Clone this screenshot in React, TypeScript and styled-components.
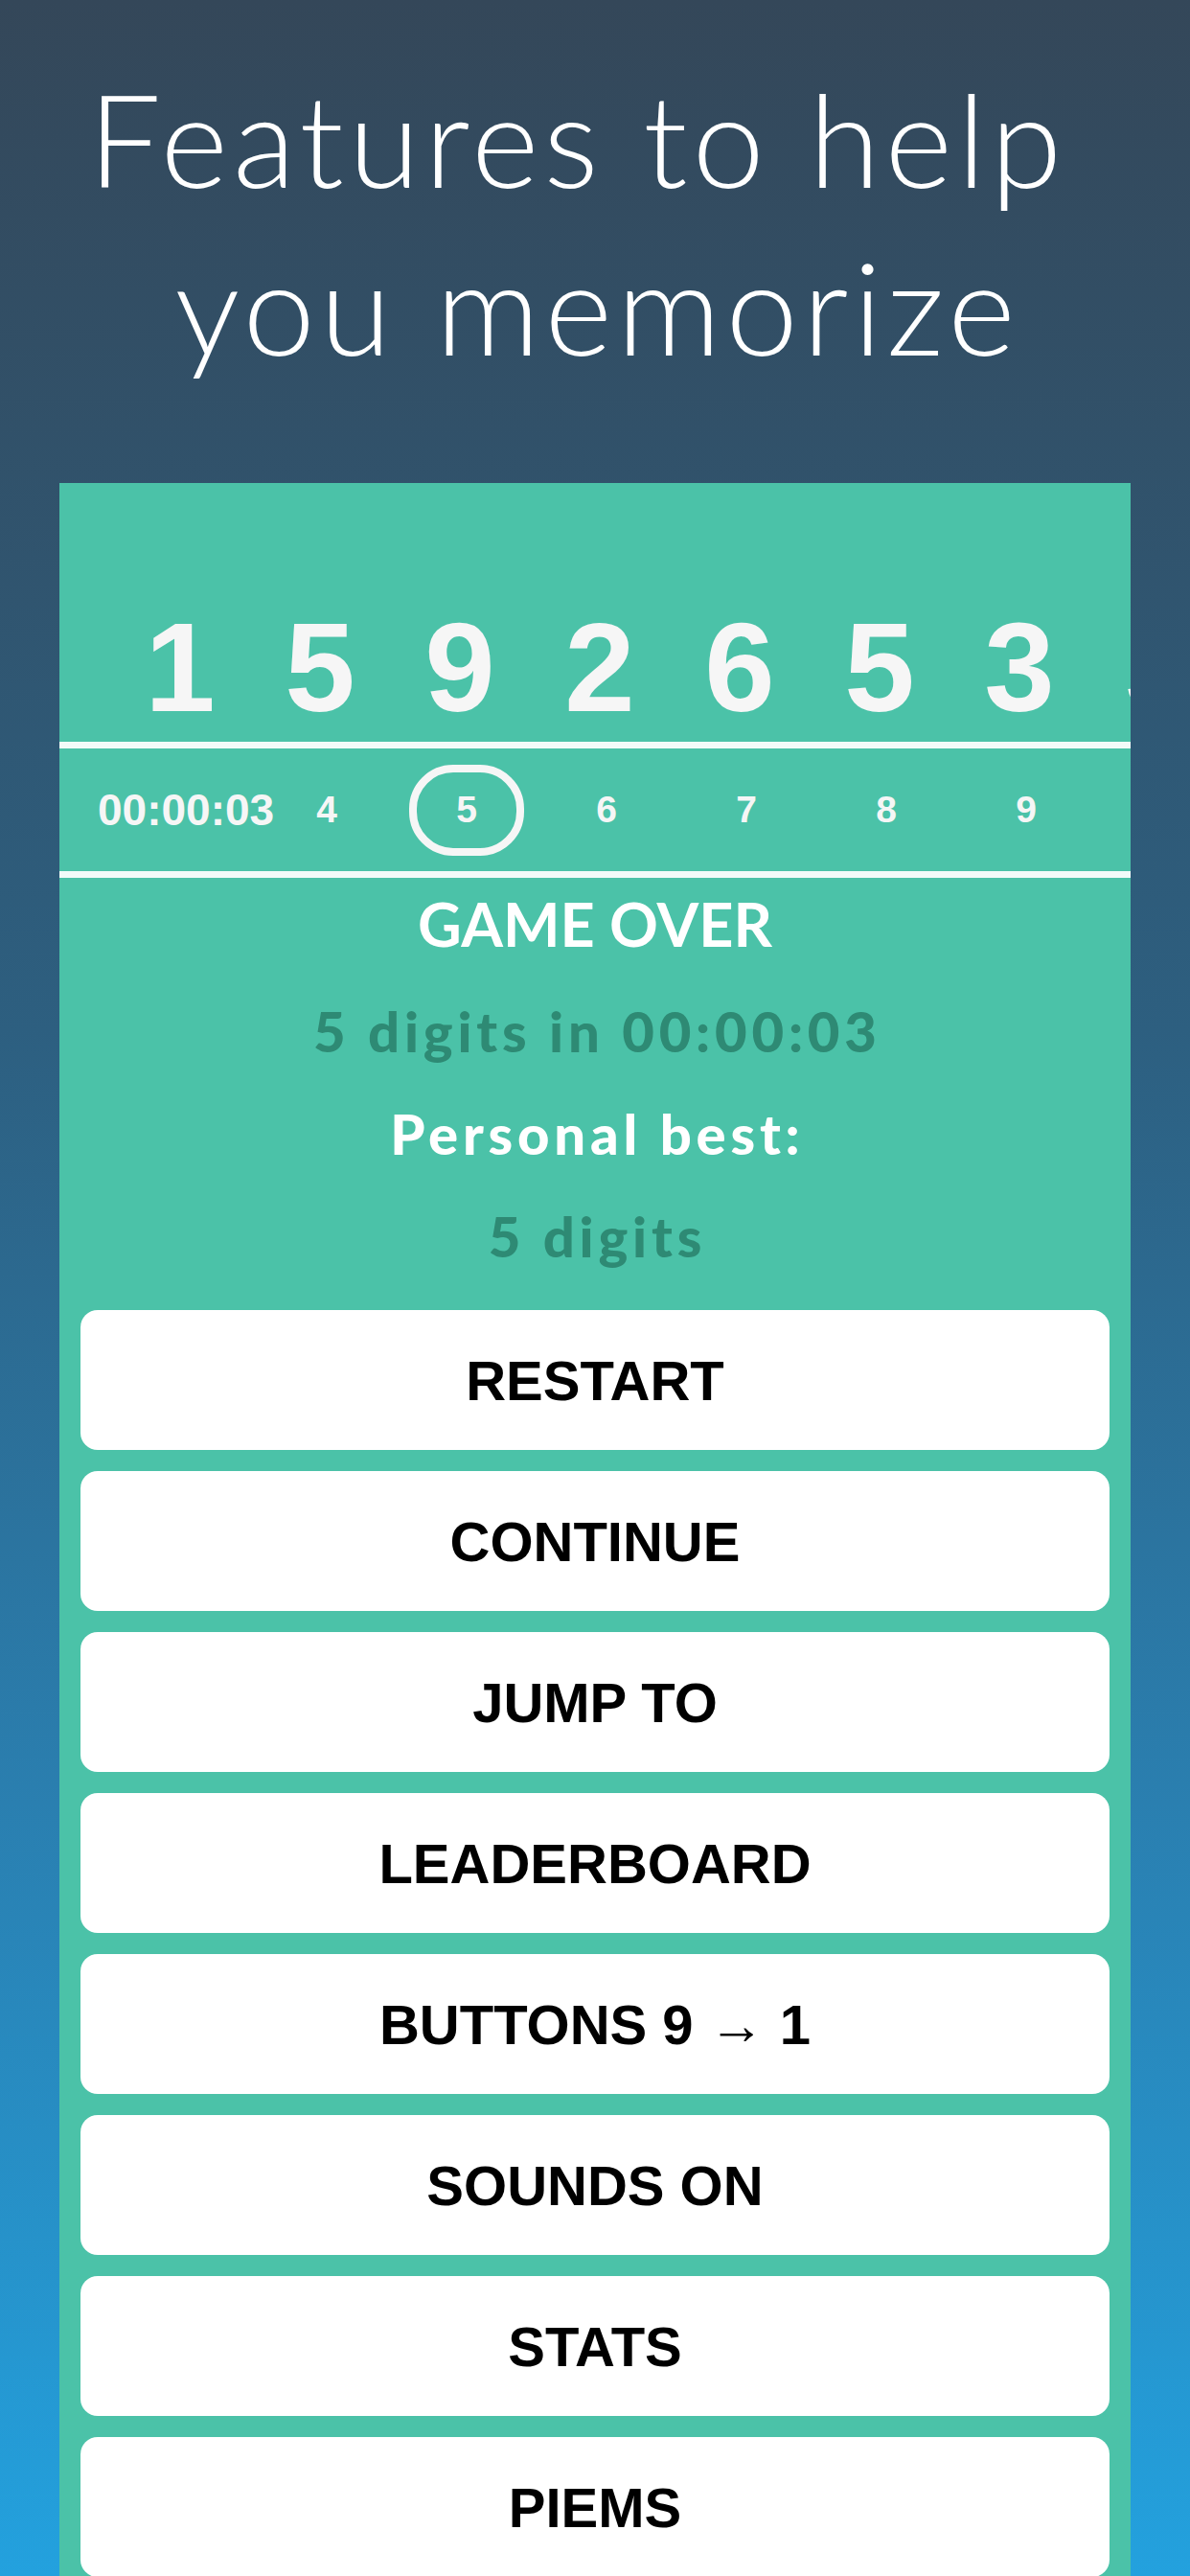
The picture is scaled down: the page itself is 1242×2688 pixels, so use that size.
import React from 'react'
import styled, { createGlobalStyle } from 'styled-components'

const GlobalStyle = createGlobalStyle`
    html, body {
        margin: 0;
        padding: 0;
    }
    body {
        font-family: "Liberation Sans", Arial, sans-serif;
    }
`

const Page = styled.div`
    height: 2688px;
    overflow: hidden;
    background: linear-gradient(180deg, #344759 0%, #2d5f80 40%, #2a7fb0 70%, #23a1de 100%);
    display: flex;
    flex-direction: column;
`

const Title = styled.h1`
    margin: 0;
    padding: 57px 0 0 5px;
    height: 504px;
    flex-shrink: 0;
    box-sizing: border-box;
    text-align: center;
    font-family: Lato, "Open Sans", sans-serif;
    font-weight: 300;
    font-size: 135px;
    line-height: 175px;
    letter-spacing: 5px;
    color: #ffffff;
`

const Panel = styled.div`
    flex: 1;
    margin: 0 62px;
    background: #4bc2a8;
    display: flex;
    flex-direction: column;
`

const DigitStrip = styled.div`
    height: 270px;
    box-sizing: border-box;
    padding: 0 0 11px 53px;
    display: flex;
    align-items: flex-end;
    overflow: hidden;
    white-space: nowrap;
`

const BigDigit = styled.span`
    flex: 0 0 146px;
    text-align: center;
    font-weight: 700;
    font-size: 132px;
    line-height: 132px;
    color: #f6f6f6;
`

const Divider = styled.div`
    height: 7px;
    flex-shrink: 0;
    background: #f2fbf9;
`

const ProgressRow = styled.div`
    height: 128px;
    padding-left: 40px;
    display: flex;
    align-items: center;
    overflow: hidden;
    white-space: nowrap;
`

const Timer = styled.span`
    flex: 0 0 166px;
    min-width: 0;
    font-weight: 700;
    font-size: 46px;
    color: #f6f6f6;
`

const StepCell = styled.div`
    flex: 0 0 146px;
    display: flex;
    align-items: center;
    justify-content: center;
`

const Step = styled.span<{ $current?: boolean }>`
    display: flex;
    align-items: center;
    justify-content: center;
    box-sizing: border-box;
    width: 120px;
    height: 95px;
    border-radius: 46px;
    border: 8px solid ${({ $current }) => ($current ? '#f6f6f6' : 'transparent')};
    font-weight: 700;
    font-size: 39px;
    color: #f6f6f6;
`

const Summary = styled.div`
    display: flex;
    flex-direction: column;
    align-items: center;
    font-family: Lato, "Open Sans", sans-serif;
`

const Heading = styled.div`
    font-size: 63px;
    font-weight: 700;
    line-height: 96px;
    padding-bottom: 10px;
    color: #ffffff;
`

const Line = styled.div<{ $muted?: boolean }>`
    font-size: 58px;
    font-weight: 900;
    line-height: 107px;
    letter-spacing: 4.8px;
    padding-left: 4.8px;
    color: ${({ $muted }) => ($muted ? '#2e8a74' : '#ffffff')};
`

const Menu = styled.div`
    padding: 24px 22px 0;
    display: flex;
    flex-direction: column;
    gap: 22px;
`

const MenuButton = styled.button`
    height: 146px;
    flex-shrink: 0;
    border: none;
    border-radius: 18px;
    background: #ffffff;
    font-family: "Liberation Sans", Arial, sans-serif;
    font-weight: 700;
    font-size: 58px;
    color: #000000;
    text-align: center;
    padding: 0;
`

const digits = ['1', '5', '9', '2', '6', '5', '3', '5']
const steps = [4, 5, 6, 7, 8, 9]
const menu = ['RESTART', 'CONTINUE', 'JUMP TO', 'LEADERBOARD', 'BUTTONS 9 → 1', 'SOUNDS ON', 'STATS', 'PIEMS']

const App = () => {
    return (
        <Page>
            <GlobalStyle />
            <Title>
                Features to help{'\u00a0'}
                <br />
                you memorize
            </Title>
            <Panel>
                <DigitStrip>
                    {digits.map((d, i) => (
                        <BigDigit key={i}>{d}</BigDigit>
                    ))}
                </DigitStrip>
                <Divider />
                <ProgressRow>
                    <Timer>00:00:03</Timer>
                    {steps.map((s) => (
                        <StepCell key={s}>
                            <Step $current={s === 5}>{s}</Step>
                        </StepCell>
                    ))}
                </ProgressRow>
                <Divider />
                <Summary>
                    <Heading>GAME OVER</Heading>
                    <Line $muted>5 digits in 00:00:03</Line>
                    <Line>Personal best:</Line>
                    <Line $muted>5 digits</Line>
                </Summary>
                <Menu>
                    {menu.map((label) => (
                        <MenuButton key={label}>{label}</MenuButton>
                    ))}
                </Menu>
            </Panel>
        </Page>
    )
}

export default App
